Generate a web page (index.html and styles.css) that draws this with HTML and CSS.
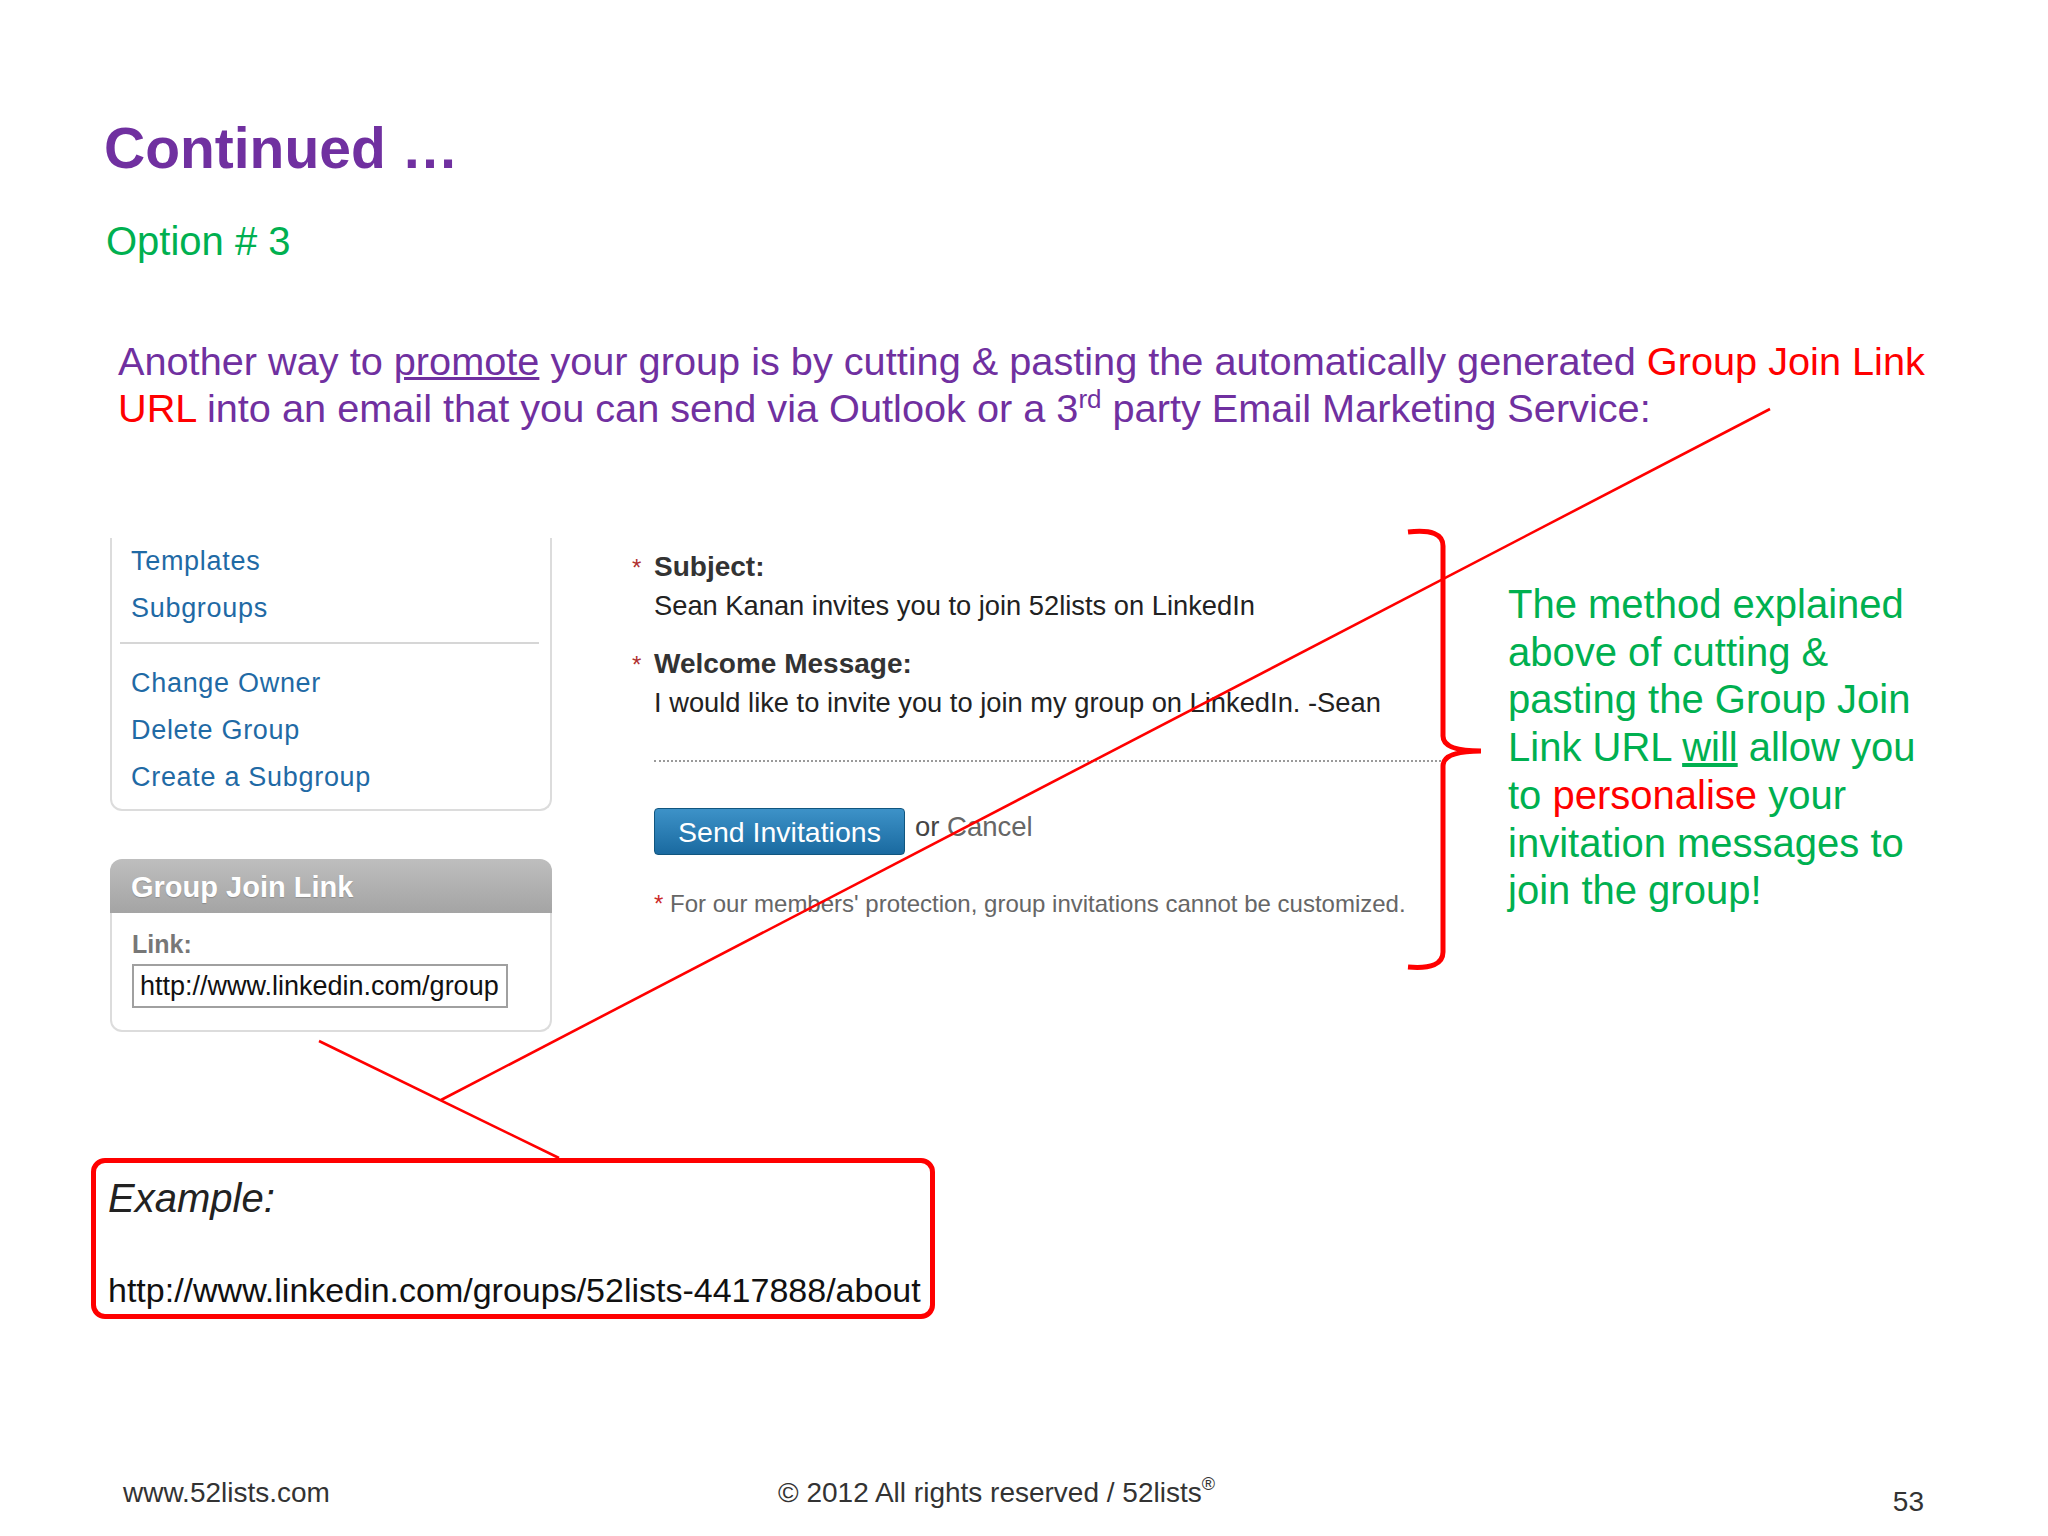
FILE: index.html
```html
<!DOCTYPE html>
<html lang="en">
<head>
<meta charset="utf-8">
<title>Continued …</title>
<link rel="stylesheet" href="styles.css">
</head>
<body>
<div class="slide">
  <h1 class="title">Continued …</h1>
  <p class="option">Option # 3</p>
  <p class="intro">Another way to <u>promote</u> your group is by cutting &amp; pasting the automatically generated <span class="red">Group Join Link</span><br><span class="red">URL</span> into an email that you can send via Outlook or a 3<sup class="sup">rd</sup> party Email Marketing Service:</p>

  <div class="shot">
    <div class="sidebar">
      <div class="panel menu">
        <a class="menu-link">Templates</a>
        <a class="menu-link">Subgroups</a>
        <div class="sep"></div>
        <a class="menu-link">Change Owner</a>
        <a class="menu-link">Delete Group</a>
        <a class="menu-link">Create a Subgroup</a>
      </div>
      <div class="join">
        <div class="join-head">Group Join Link</div>
        <div class="join-body">
          <div class="join-label">Link:</div>
          <div class="join-input">http://www.linkedin.com/group</div>
        </div>
      </div>
    </div>

    <div class="form">
      <div class="flabel"><span class="req">*</span>Subject:</div>
      <div class="fvalue">Sean Kanan invites you to join 52lists on LinkedIn</div>
      <div class="flabel flabel-2"><span class="req">*</span>Welcome Message:</div>
      <div class="fvalue">I would like to invite you to join my group on LinkedIn. -Sean</div>
      <div class="dots"></div>
      <div class="actions">
        <span class="btn">Send Invitations</span>
        <span class="or">or <span class="cancel">Cancel</span></span>
      </div>
      <div class="fnote"><span class="req2">*</span> For our members' protection, group invitations cannot be customized.</div>
    </div>

    <div class="callout">The method explained<br>above of cutting &amp;<br>pasting the Group Join<br>Link URL <u>will</u> allow you<br>to <span class="red">personalise</span> your<br>invitation messages to<br>join the group!</div>
  </div>

  <div class="example">
    <div class="ex-title">Example:</div>
    <div class="ex-url">http://www.linkedin.com/groups/52lists-4417888/about</div>
  </div>

  <footer class="footer">
    <span class="f-left">www.52lists.com</span>
    <span class="f-mid">© 2012 All rights reserved / 52lists<sup class="reg">®</sup></span>
    <span class="f-num">53</span>
  </footer>

  <svg class="annot" width="2048" height="1536" viewBox="0 0 2048 1536" aria-hidden="true">
    <line x1="1770" y1="409" x2="441" y2="1100" stroke="#ff0000" stroke-width="2.6"/>
    <line x1="319" y1="1041" x2="559" y2="1158" stroke="#ff0000" stroke-width="2.6"/>
    <path d="M1408 532 Q1443 528 1443 546 L1443 736 Q1443 751 1481 751 Q1443 751 1443 766 L1443 952 Q1443 970 1408 967" fill="none" stroke="#ff0000" stroke-width="5"/>
  </svg>
</div>
</body>
</html>
```

FILE: styles.css
```css
html, body {
  margin: 0;
  padding: 0;
  background: #ffffff;
}

body {
  width: 2048px;
  height: 1536px;
  overflow: hidden;
  font-family: "Liberation Sans", Arial, sans-serif;
}

.slide {
  position: relative;
  width: 2048px;
  height: 1536px;
  padding-top: 115px;
  box-sizing: border-box;
  background: #ffffff;
}

.title {
  margin: 0 0 0 104px;
  font-size: 57px;
  line-height: 66px;
  font-weight: bold;
  color: #7030a0;
}

.option {
  margin: 36px 0 0 106px;
  font-size: 40px;
  line-height: 48px;
  color: #00b050;
}

.intro {
  margin: 73px 0 0 118px;
  font-size: 39.7px;
  line-height: 47px;
  color: #7030a0;
  white-space: nowrap;
}

.red {
  color: #ff0000;
}

.sup {
  font-size: 26px;
  line-height: 0;
  vertical-align: 14px;
}

/* screenshot region */
.shot {
  display: flex;
  align-items: flex-start;
  margin-top: 106px;
  padding-left: 110px;
}

.sidebar {
  width: 442px;
  flex-shrink: 0;
}

.menu {
  border: 2px solid #dcdcdc;
  border-top: none;
  border-radius: 0 0 12px 12px;
  padding: 0 11px 8px 19px;
}

.menu-link {
  display: block;
  font-size: 27px;
  line-height: 47px;
  letter-spacing: 0.7px;
  color: #1f6aa5;
  white-space: nowrap;
}

.sep {
  height: 2px;
  background: #d6d6d6;
  margin: 10px 0 16px -11px;
}

.join {
  margin-top: 48px;
}

.join-head {
  height: 54px;
  line-height: 57px;
  padding-left: 21px;
  font-size: 29px;
  font-weight: bold;
  color: #ffffff;
  text-shadow: 0 1px 1px rgba(0, 0, 0, 0.18);
  background: linear-gradient(#bebebe, #a4a4a4);
  border-radius: 12px 12px 0 0;
}

.join-body {
  border: 2px solid #dcdcdc;
  border-top: none;
  border-radius: 0 0 12px 12px;
  padding: 16px 20px 22px 20px;
}

.join-label {
  font-size: 25px;
  line-height: 30px;
  font-weight: bold;
  color: #777777;
}

.join-input {
  margin-top: 5px;
  width: 376px;
  height: 44px;
  box-sizing: border-box;
  border: 2px solid #a0a0a0;
  padding: 0 6px;
  font-size: 27px;
  line-height: 41px;
  color: #111111;
  white-space: nowrap;
  overflow: hidden;
}

.form {
  width: 809px;
  flex-shrink: 0;
  margin: 11px 0 0 80px;
}

.flabel {
  font-size: 28px;
  line-height: 36px;
  font-weight: bold;
  color: #333333;
  white-space: nowrap;
}

.flabel-2 {
  margin-top: 22px;
}

.req {
  display: inline-block;
  width: 22px;
  font-weight: normal;
  font-size: 24px;
  color: #b03030;
}

.fvalue {
  margin-top: 1px;
  padding-left: 22px;
  font-size: 27.3px;
  line-height: 37px;
  color: #222222;
  white-space: nowrap;
}

.dots {
  margin: 39px 0 0 22px;
  height: 0;
  border-top: 2px dotted #9a9a9a;
}

.actions {
  display: flex;
  align-items: flex-start;
  margin: 46px 0 0 22px;
}

.btn {
  display: block;
  width: 251px;
  height: 47px;
  box-sizing: border-box;
  border: 1px solid #11567f;
  border-radius: 4px;
  background: linear-gradient(#3d92c8, #1a6aa0);
  color: #ffffff;
  font-size: 28.5px;
  line-height: 46px;
  text-align: center;
  white-space: nowrap;
}

.or {
  margin: 1px 0 0 10px;
  font-size: 27.5px;
  line-height: 36px;
  color: #444444;
  white-space: nowrap;
}

.cancel {
  color: #666666;
}

.fnote {
  margin-top: 34px;
  padding-left: 22px;
  font-size: 24px;
  line-height: 30px;
  color: #666666;
  white-space: nowrap;
}

.req2 {
  color: #cc2a2a;
}

.callout {
  margin: 43px 0 0 67px;
  font-size: 40px;
  line-height: 47.7px;
  color: #00b050;
  white-space: nowrap;
}

/* example box */
.example {
  margin: 126px 0 0 91px;
  width: 844px;
  height: 161px;
  box-sizing: border-box;
  border: 5px solid #ff0000;
  border-radius: 14px;
  padding: 11px 0 0 12px;
}

.ex-title {
  font-size: 40px;
  line-height: 48px;
  font-style: italic;
  color: #222222;
}

.ex-url {
  margin-top: 48px;
  font-size: 34px;
  line-height: 40px;
  color: #111111;
  white-space: nowrap;
}

/* footer */
.footer {
  display: flex;
  align-items: flex-start;
  margin-top: 157px;
  padding: 0 124px 0 123px;
  font-size: 28px;
  line-height: 34px;
  color: #333333;
}

.f-left {
  width: 655px;
  flex-shrink: 0;
}

.reg {
  font-size: 18px;
  line-height: 0;
  vertical-align: 12px;
}

.f-num {
  margin-left: auto;
  margin-top: 9px;
}

.annot {
  position: absolute;
  top: 0;
  left: 0;
  pointer-events: none;
}
```
